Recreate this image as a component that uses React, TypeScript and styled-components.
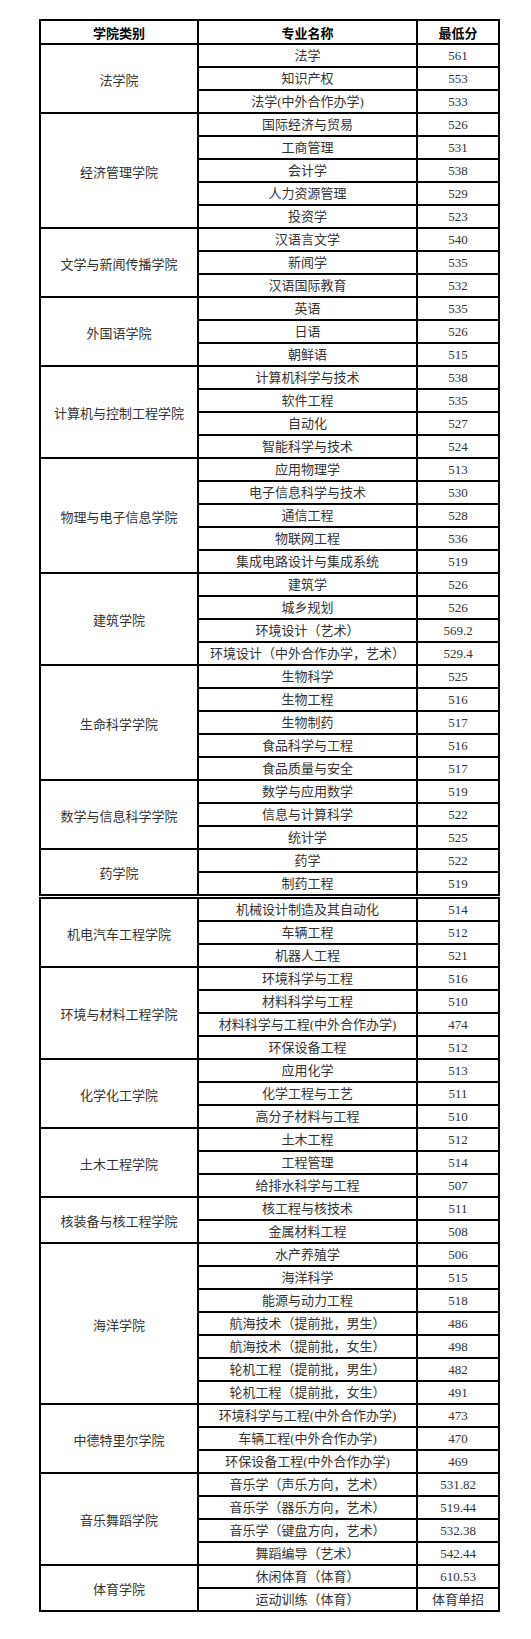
import React from 'react';
import styled, { createGlobalStyle } from 'styled-components';

type Major = [string, string];
type College = { name: string; majors: Major[] };

const partOne: College[] = [
  { name: '法学院', majors: [['法学', '561'], ['知识产权', '553'], ['法学(中外合作办学)', '533']] },
  {
    name: '经济管理学院',
    majors: [['国际经济与贸易', '526'], ['工商管理', '531'], ['会计学', '538'], ['人力资源管理', '529'], ['投资学', '523']],
  },
  { name: '文学与新闻传播学院', majors: [['汉语言文学', '540'], ['新闻学', '535'], ['汉语国际教育', '532']] },
  { name: '外国语学院', majors: [['英语', '535'], ['日语', '526'], ['朝鲜语', '515']] },
  {
    name: '计算机与控制工程学院',
    majors: [['计算机科学与技术', '538'], ['软件工程', '535'], ['自动化', '527'], ['智能科学与技术', '524']],
  },
  {
    name: '物理与电子信息学院',
    majors: [
      ['应用物理学', '513'],
      ['电子信息科学与技术', '530'],
      ['通信工程', '528'],
      ['物联网工程', '536'],
      ['集成电路设计与集成系统', '519'],
    ],
  },
  {
    name: '建筑学院',
    majors: [['建筑学', '526'], ['城乡规划', '526'], ['环境设计（艺术）', '569.2'], ['环境设计（中外合作办学，艺术）', '529.4']],
  },
  {
    name: '生命科学学院',
    majors: [['生物科学', '525'], ['生物工程', '516'], ['生物制药', '517'], ['食品科学与工程', '516'], ['食品质量与安全', '517']],
  },
  { name: '数学与信息科学学院', majors: [['数学与应用数学', '519'], ['信息与计算科学', '522'], ['统计学', '525']] },
  { name: '药学院', majors: [['药学', '522'], ['制药工程', '519']] },
];

const partTwo: College[] = [
  { name: '机电汽车工程学院', majors: [['机械设计制造及其自动化', '514'], ['车辆工程', '512'], ['机器人工程', '521']] },
  {
    name: '环境与材料工程学院',
    majors: [['环境科学与工程', '516'], ['材料科学与工程', '510'], ['材料科学与工程(中外合作办学)', '474'], ['环保设备工程', '512']],
  },
  { name: '化学化工学院', majors: [['应用化学', '513'], ['化学工程与工艺', '511'], ['高分子材料与工程', '510']] },
  { name: '土木工程学院', majors: [['土木工程', '512'], ['工程管理', '514'], ['给排水科学与工程', '507']] },
  { name: '核装备与核工程学院', majors: [['核工程与核技术', '511'], ['金属材料工程', '508']] },
  {
    name: '海洋学院',
    majors: [
      ['水产养殖学', '506'],
      ['海洋科学', '515'],
      ['能源与动力工程', '518'],
      ['航海技术（提前批，男生）', '486'],
      ['航海技术（提前批，女生）', '498'],
      ['轮机工程（提前批，男生）', '482'],
      ['轮机工程（提前批，女生）', '491'],
    ],
  },
  {
    name: '中德特里尔学院',
    majors: [['环境科学与工程(中外合作办学)', '473'], ['车辆工程(中外合作办学)', '470'], ['环保设备工程(中外合作办学)', '469']],
  },
  {
    name: '音乐舞蹈学院',
    majors: [
      ['音乐学（声乐方向，艺术）', '531.82'],
      ['音乐学（器乐方向，艺术）', '519.44'],
      ['音乐学（键盘方向，艺术）', '532.38'],
      ['舞蹈编导（艺术）', '542.44'],
    ],
  },
  { name: '体育学院', majors: [['休闲体育（体育）', '610.53'], ['运动训练（体育）', '体育单招']] },
];

const GlobalStyle = createGlobalStyle`
  body {
    margin: 0;
    background: #fff;
  }
`;

const Page = styled.div`
  padding: 19px 0 20px 39px;
`;

const Table = styled.table<{ $continued?: boolean }>`
  width: 459px;
  table-layout: fixed;
  border-collapse: collapse;
  margin-top: ${(p) => (p.$continued ? '1px' : '0')};
  font-family: 'Liberation Serif', 'Noto Sans CJK SC', serif;
  font-size: 13px;
  color: #333;
`;

const HeadCell = styled.th`
  height: 22px;
  padding: 0;
  border: 2px solid #000;
  font-family: 'Noto Sans CJK SC', sans-serif;
  font-weight: 700;
  font-size: 13px;
  color: #000;
  line-height: 1;
`;

const Cell = styled.td`
  height: 21px;
  padding: 0;
  border: 2px solid #000;
  text-align: center;
  vertical-align: middle;
  line-height: 1;
  white-space: nowrap;
`;

const CollegeCell = styled(Cell)`
  padding-top: 3px;
`;

const ScoreTable: React.FC<{ colleges: College[]; withHead?: boolean; continued?: boolean }> = ({
  colleges,
  withHead,
  continued,
}) => (
  <Table $continued={continued}>
    <colgroup>
      <col style={{ width: 158 }} />
      <col style={{ width: 219 }} />
      <col style={{ width: 82 }} />
    </colgroup>
    {withHead && (
      <thead>
        <tr>
          <HeadCell>学院类别</HeadCell>
          <HeadCell>专业名称</HeadCell>
          <HeadCell>最低分</HeadCell>
        </tr>
      </thead>
    )}
    <tbody>
      {colleges.map((c) =>
        c.majors.map(([major, score], i) => (
          <tr key={c.name + major}>
            {i === 0 && <CollegeCell rowSpan={c.majors.length}>{c.name}</CollegeCell>}
            <Cell>{major}</Cell>
            <Cell>{score}</Cell>
          </tr>
        ))
      )}
    </tbody>
  </Table>
);

export default function App() {
  return (
    <>
      <GlobalStyle />
      <Page>
        <ScoreTable colleges={partOne} withHead />
        <ScoreTable colleges={partTwo} continued />
      </Page>
    </>
  );
}
